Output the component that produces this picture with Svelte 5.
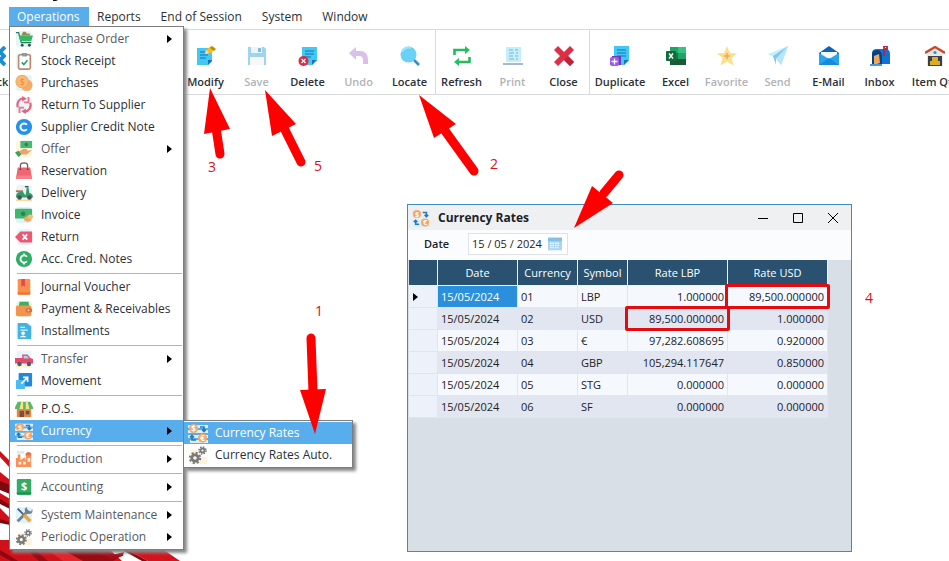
<script>
  const art = {
    cart: `<rect x="1" y="1" width="18" height="18" rx="4" fill="#e2f6f6"/><path d="M1 3h3l3 11h11" fill="none" stroke="#2a7d57" stroke-width="1.4"/><path d="M4 6h16l-2 6.5H6z" fill="#35b765"/><path d="M7 6l2-4h3l1 2h3l1 2z" fill="#9c8a4c"/><circle cx="8" cy="17" r="1.6" fill="#355"/><circle cx="16" cy="17" r="1.6" fill="#355"/>`,
    clip: `<rect x="1" y="1" width="18" height="18" rx="4" fill="#eaf6fa"/><rect x="4" y="3" width="13" height="16" rx="1.5" fill="#fff" stroke="#b98a70" stroke-width="1.8"/><rect x="7.5" y="1" width="6" height="4" rx="1" fill="#8c9aa6"/><path d="M7.5 11.5l2.3 2.4 4-4.6" fill="none" stroke="#2b9b6a" stroke-width="1.7"/>`,
    coins: `<rect x="1" y="1" width="18" height="18" rx="4" fill="#e4f5fa"/><circle cx="13" cy="12.500" r="6.500" fill="#f3ad68"/><circle cx="8" cy="8.500" r="7" fill="#fbb970" stroke="#f0a25a"/><text x="8" y="12" text-anchor="middle" font-size="9" fill="#e8823c">$</text>`,
    swap: `<rect x="1" y="1" width="18" height="18" rx="4" fill="#e9f5fb"/><path d="M3 12.500a7.500 7.500 0 0 1 6-10M17 7.500a7.500 7.500 0 0 1-6 10" fill="none" stroke="#e8607a" stroke-width="2.400"/><path d="M15 1v6h-5M5 19v-6h5" fill="none" stroke="#ee7388" stroke-width="2"/><path d="M8 0l5 3-5 3zM12 20l-5-3 5-3z" fill="#e8607a"/>`,
    cblue: `<circle cx="10" cy="10" r="9" fill="#2492e8"/><path d="M13.200 7.500a4 4 0 1 0 0 5" fill="none" stroke="#fff" stroke-width="2.200"/>`,
    offer: `<rect x="1" y="1" width="18" height="18" rx="4" fill="#fff4dc"/><rect x="6" y="1" width="13" height="8" fill="#4bb871"/><circle cx="12.500" cy="5" r="2" fill="#2a8651"/><path d="M4 13l5-3h4l1 2 5-1-6 5H6z" fill="#eda36c"/><path d="M0 14l4-2 3 4-3 3z" fill="#35a267"/>`,
    bag: `<path d="M6 7V4q0-3 4-3t4 3v3" fill="none" stroke="#79555e" stroke-width="1.500"/><path d="M3 6h14l2 13H1z" fill="#ee6672"/><path d="M1.500 15h17l.5 4H1z" fill="#f58089"/><circle cx="6" cy="8" r="1" fill="#833"/><circle cx="14" cy="8" r="1" fill="#833"/>`,
    scooter: `<rect x="1" y="1" width="18" height="15" rx="4" fill="#e6f5fa"/><path d="M1 17h18v2H1z" fill="#fbdc9c"/><path d="M1 7h8v2H1z" fill="#c86b42"/><path d="M1 15q0-6 5-6h3l2 3h1l1-8h2l1 6q4 1 4 5z" fill="#369a6b"/><path d="M11 3h4" stroke="#355" stroke-width="1.500"/><circle cx="5" cy="15" r="2.600" fill="#44545c"/><circle cx="16" cy="15" r="2.600" fill="#44545c"/>`,
    cash: `<rect x="1" y="1" width="18" height="18" rx="4" fill="#dff2fa"/><rect x="0" y="3" width="19" height="11" rx="1" fill="#43b66d"/><circle cx="9" cy="8.500" r="2.500" fill="#288550"/><ellipse cx="14" cy="14.500" rx="4" ry="3" fill="#f1a960"/><ellipse cx="17" cy="12" rx="3" ry="2.500" fill="#f6bd7d"/>`,
    ret: `<rect x="2" y="1" width="17" height="18" rx="4" fill="#e6f3fb"/><path d="M0 10l6-6h13v12H6z" fill="#ee5672"/><path d="M8.500 7l5 6m0-6l-5 6" stroke="#fff" stroke-width="2"/>`,
    cgreen: `<circle cx="10" cy="10" r="9" fill="#2fae66"/><path d="M13.200 7.500a4 4 0 1 0 0 5M10 4v3m0 6v3" fill="none" stroke="#fff" stroke-width="2"/>`,
    book: `<rect x="3" y="1" width="14" height="18" rx="1.500" fill="#fb8f4e"/><path d="M3 16h14v2H3z" fill="#e9713b"/><path d="M7 1h4v9l-2-2-2 2z" fill="#e3484f"/>`,
    wallet: `<rect x="1" y="1" width="18" height="18" rx="4" fill="#e8f6ea"/><path d="M5 2h10l1 6H4z" fill="#3fae62"/><rect x="1" y="6" width="17" height="12" rx="2" fill="#f2934e"/><rect x="12" y="9" width="7" height="5" rx="2" fill="#d86f39"/><circle cx="15" cy="11.500" r="1.200" fill="#fbd0a0"/>`,
    doc: `<rect x="1" y="1" width="18" height="18" rx="4" fill="#e4f6fb"/><path d="M3 1h10l5 4v14H3z" fill="#42b4df"/><path d="M6 6h5m-5 3h8" stroke="#d9f6ff" stroke-width="1.500"/><circle cx="9" cy="12.500" r="2" fill="#fff"/><path d="M5 17q4-4 8 0z" fill="#fff"/>`,
    truck: `<path d="M2 1h16v12H2z" fill="#e4f6fb"/><path d="M1 17h18v2H1z" fill="#ffeec7"/><path d="M0 9h8V5h6l3 4 3 1v5H0z" fill="#e8486a"/><path d="M9.500 6.500h4l2 3h-6z" fill="#9dd8ee"/><circle cx="5" cy="15.500" r="2.500" fill="#535c68"/><circle cx="15.500" cy="15.500" r="2.500" fill="#535c68"/>`,
    move: `<rect x="4" y="1" width="15" height="15" rx="1" fill="#2488d8"/><rect x="1" y="9" width="10" height="10" rx="1" fill="#49bdf3"/><path d="M7 13l7-7m-5 0h5v5" fill="none" stroke="#fff" stroke-width="1.800"/>`,
    shop: `<rect x="2" y="8" width="16" height="11" fill="#dd8a4a"/><rect x="5" y="12" width="5" height="7" fill="#80503c"/><rect x="12" y="12" width="4" height="4" fill="#6b5240"/><path d="M3 2h14l3 6v2H0V8z" fill="#58b968"/><path d="M7 2h2v8H5zm5 0h2l2 8h-4z" fill="#ffe08a"/>`,
    currency: `<path d="M0 2h20v3H0zm0 5h20v3H0zm0 5h20v3H0zm2 5h18v3H2z" fill="#d9f0fa"/><circle cx="5.500" cy="5.500" r="4.500" fill="#f9a662"/><circle cx="14.500" cy="15" r="4.500" fill="#f9a662"/><text x="5.500" y="8.500" text-anchor="middle" font-size="8" font-weight="700" fill="#fff">$</text><text x="14.500" y="18" text-anchor="middle" font-size="8" font-weight="700" fill="#fff">€</text><path d="M12 4h4v4m-2-1.500l2 2 2-2M8 17H4v-4m-2 1.500l2-2 2 2" fill="none" stroke="#2979b8" stroke-width="1.700"/>`,
    factory: `<path d="M2 1h8v3H2z" fill="#cdeefa"/><path d="M1 19V9h2V5h3v6l5-3v3l1-1V4q3-3 6 0v15z" fill="#f8905c"/><path d="M12 4q3-3 6 0v2h-6z" fill="#e66f45"/><path d="M4 13h3v3H4zm5 0h3v3H9zm5-4h3v4h-3z" fill="#fff0df"/>`,
    dollar: `<rect x="2" y="1" width="16" height="18" rx="1.500" fill="#31ad68"/><path d="M2 16h16v2H2z" fill="#208d50"/><text x="10" y="13.500" text-anchor="middle" font-size="12" font-weight="700" fill="#fff">$</text>`,
    tools: `<rect x="1" y="1" width="18" height="18" rx="4" fill="#def2fb"/><path d="M3 17L15 5" stroke="#70808c" stroke-width="3"/><path d="M13 1l1 4 4 1 1-3q2 6-4 6-5-1-4-6z" fill="#70808c"/><path d="M3 3l6 6" stroke="#4b5f6d" stroke-width="2"/><path d="M10 10l7 7" stroke="#f1a43b" stroke-width="4"/>`,
    gears: `<path d="M6 12h13v7H4zM2 5h9v5H2z" fill="#fff3dc"/><g fill="none" stroke="#77797c"><circle cx="7" cy="13" r="3.200" stroke-width="2.800"/><circle cx="7" cy="13" r="5.200" stroke-width="2" stroke-dasharray="2.080 2"/><circle cx="14.500" cy="5.500" r="2" stroke-width="1.800"/><circle cx="14.500" cy="5.500" r="3.500" stroke-width="1.600" stroke-dasharray="1.400 1.350"/></g>`,
    back: `<path d="M19 1l-9 9 9 9" fill="none" stroke="#1b8fd0" stroke-width="4"/><path d="M9 1l9 9-9 9" fill="none" stroke="#1b8fd0" stroke-width="4"/>`,
    modify: `<path d="M1 2h15v13l-4 4H1z" fill="#43c8f5"/><path d="M16 14v1l-4 4v-5z" fill="#1675c0"/><path d="M4 6h7M4 9h8m-8 3h6" stroke="#1770b5" stroke-width="1.200"/><path d="M9 8l1-4 5-4 4 3-4 4z" fill="#f5bd20"/><path d="M16 0l4 3-2 2-4-3z" fill="#bd8912"/><path d="M9 8l1-4 3 3z" fill="#f6e5bb"/>`,
    save: `<path d="M1 1h16l2 2v16H1z" fill="#9fd4ef"/><path d="M4 1h11v6H4z" fill="#eef4f8"/><path d="M11 2h3v4h-3z" fill="#7fbbe0"/><path d="M3 11h14v8H3z" fill="#f6f8fa"/>`,
    del: `<path d="M4 1h15v13l-5 5H4z" fill="#43c8f5"/><path d="M19 14l-5 5v-5z" fill="#1675c0"/><path d="M7 5h9M7 8h9m-9 3h6" stroke="#1770b5" stroke-width="1.200"/><circle cx="5.500" cy="15" r="5" fill="#d92b41"/><path d="M3.500 13l4 4m0-4l-4 4" stroke="#fff" stroke-width="1.300"/>`,
    undo: `<path d="M0 7l7-6v4h4q8 0 8 9v4h-5v-4q0-4-4-4H7v4z" fill="#d9c0ea"/>`,
    locate: `<path d="M13 13l6 6" stroke="#3290c4" stroke-width="2.600"/><circle cx="8.500" cy="8.500" r="8" fill="#69d1f5"/><path d="M2 6a7 7 0 0 1 9-4" fill="none" stroke="#9ce6fc" stroke-width="2"/>`,
    refresh: `<g fill="none" stroke="#28b95c" stroke-width="2.600"><path d="M2.500 9V4H14M17.500 11v5H6"/></g><path d="M13 0l5 4-5 4zM7 12l-5 4 5 4z" fill="#1fc162"/>`,
    print: `<path d="M3 1h15v15H3z" fill="#c2effa"/><path d="M0 17h20v2H0z" fill="#a7b9d2"/><path d="M6 4h4m2 0h3M6 7h5m2 0h2M6 10h4m2 0h3M6 13h5m2 0h2" stroke="#7eb3cf" stroke-width="1.200"/>`,
    close: `<path d="M0 4l4-4 6 6 6-6 4 4-6 6 6 6-4 4-6-6-6 6-4-4 6-6z" fill="#de3044"/><path d="M10 14l4-4 6 6-4 4z" fill="#c2213c"/>`,
    dup: `<path d="M4 0h15v14l-5 5H4z" fill="#43c8f5"/><path d="M19 14l-5 5v-5z" fill="#1675c0"/><path d="M7 4h9M7 7h9m-9 3h9" stroke="#1770b5" stroke-width="1.200"/><path d="M2 10h9v9H2z" fill="#6d3bb5"/><rect x="0" y="11" width="9" height="9" rx="2" fill="#9a5ce6"/><path d="M4.500 12.500v6m-3-3h6" stroke="#fff" stroke-width="1.300"/>`,
    excel: `<path d="M4 1h8v9H4z" fill="#21a366"/><path d="M12 1h8v6h-8z" fill="#33c481"/><path d="M4 7h8v6H4z" fill="#107c41"/><path d="M12 7h8v6h-8z" fill="#21a366"/><path d="M4 13h16v6H4z" fill="#185c37"/><rect x="0" y="5" width="10" height="10" rx="1" fill="#0f6b39"/><path d="M3 7.500l4 5m0-5l-4 5" stroke="#fff" stroke-width="1.500"/>`,
    star: `<path d="M10 0l3 7 7 .5-5.500 4.500 2 7.500L10 15.500 3.500 19.500l2-7.500L0 7.500 7 7z" fill="#fbe08c"/><path d="M10 7v6m-3-3h6" stroke="#f2a65c" stroke-width="1.500"/>`,
    send: `<path d="M0 8L20 0 7 12z" fill="#c4effc"/><path d="M20 0L13 19l-3-7z" fill="#a4dcf4"/><path d="M5 10l15-10L8 13v6z" fill="#83c9eb"/><path d="M8 13l12-13-7 19z" fill="#b4e7fa"/>`,
    mail: `<path d="M0 7l10-7 10 7v5H0z" fill="#1263b3"/><path d="M2 6h16v8H2z" fill="#f5faff"/><path d="M0 7l10 6 10-6v12H0z" fill="#2aa5ec"/><path d="M0 19l10-7 10 7z" fill="#168adb"/>`,
    inbox: `<path d="M2 17V7q0-4 5-4h8q5 0 5 5v10H2z" fill="#0f73d4"/><path d="M2 18V8q1-4 5-4t5 5v9z" fill="#0b3f84"/><path d="M4 10l5-2 1 9-6 2z" fill="#eca95c"/><path d="M14 10V0h3v3h-2" fill="none" stroke="#b82343" stroke-width="1.800"/><path d="M0 19h12" stroke="#1684e0" stroke-width="1.600"/>`,
    stock: `<path d="M2 7l8-5 8 5v13H2z" fill="#e6e7e9"/><path d="M0 7l10-6 10 6" fill="none" stroke="#c74a28" stroke-width="2.400"/><path d="M3 10h14v10H3z" fill="#3b3f47"/><path d="M5 15h10v4H5zm2-4h6v4H7z" fill="#dfac20"/><circle cx="10" cy="6.500" r="1.600" fill="#2492dc"/>`,
    calendar: `<rect x="0" y="1" width="20" height="18" fill="#a9d5f1"/><path d="M0 1h20v5H0z" fill="#83bfe6"/><path d="M3 9h14M3 12h14M3 15h12" stroke="#fff" stroke-width="2" stroke-dasharray="2 1.500"/>`
  };

  const menus = ['Operations', 'Reports', 'End of Session', 'System', 'Window'];
  const groups = [
    [
      ['modify', 'Modify'],
      ['save', 'Save', true],
      ['del', 'Delete'],
      ['undo', 'Undo', true],
      ['locate', 'Locate']
    ],
    [
      ['refresh', 'Refresh'],
      ['print', 'Print', true],
      ['close', 'Close']
    ],
    [
      ['dup', 'Duplicate'],
      ['excel', 'Excel'],
      ['star', 'Favorite', true],
      ['send', 'Send', true],
      ['mail', 'E-Mail'],
      ['inbox', 'Inbox'],
      ['stock', 'Item Qty']
    ]
  ];
  const sections = [
    [
      ['cart', 'Purchase Order', true],
      ['clip', 'Stock Receipt'],
      ['coins', 'Purchases'],
      ['swap', 'Return To Supplier'],
      ['cblue', 'Supplier Credit Note'],
      ['offer', 'Offer', true],
      ['bag', 'Reservation'],
      ['scooter', 'Delivery'],
      ['cash', 'Invoice'],
      ['ret', 'Return'],
      ['cgreen', 'Acc. Cred. Notes']
    ],
    [
      ['book', 'Journal Voucher'],
      ['wallet', 'Payment & Receivables'],
      ['doc', 'Installments']
    ],
    [
      ['truck', 'Transfer', true],
      ['move', 'Movement']
    ],
    [
      ['shop', 'P.O.S.'],
      ['currency', 'Currency', true]
    ],
    [['factory', 'Production', true]],
    [['dollar', 'Accounting', true]],
    [
      ['tools', 'System Maintenance', true],
      ['gears', 'Periodic Operation', true]
    ]
  ];
  const submenu = [
    ['currency', 'Currency Rates'],
    ['gears', 'Currency Rates Auto.']
  ];
  const rates = [
    ['01', 'LBP', '1.000000', '89,500.000000'],
    ['02', 'USD', '89,500.000000', '1.000000'],
    ['03', '€', '97,282.608695', '0.920000'],
    ['04', 'GBP', '105,294.117647', '0.850000'],
    ['05', 'STG', '0.000000', '0.000000'],
    ['06', 'SF', '0.000000', '0.000000']
  ];
  let date = $state('15 / 05 / 2024');
</script>

{#snippet icon(name, size)}
  <svg width={size} height={size} viewBox="0 0 20 20" aria-hidden="true">{@html art[name]}</svg>
{/snippet}

{#snippet tool([name, label, off])}
  <button class="tool" disabled={off}>
    {@render icon(name, 20)}
    <span>{label}</span>
  </button>
{/snippet}

<div class="app">
  <svg class="wallpaper" width="190" height="115" viewBox="0 0 190 115" aria-hidden="true">
    <path d="M0 5l10 10v7L0 11zM0 26l10 8v13L0 43zM0 47l10 6v9L0 57zM0 62l10 10v6l-10-3z" fill="#d01018" />
    <path d="M0 35l10 4v9L0 44zM0 53l10 6v4L0 58zM0 73l10 3v3L0 77z" fill="#7c0810" />
    <path d="M0 94h20l88 8 14 13H0z" fill="#cf1119" />
    <path d="M34 103l14 12h-9l-13-12zM62 103h35l24 7-8 5H74z" fill="#980b13" />
    <path d="M48 104l15 11h20l-20-11z" fill="#e5242b" />
    <path d="M98 103l14 6 12-3-1 4-11 3-19-8z" fill="#a90d15" />
    <path d="M124 102h37l19 13h-32z" fill="#d3141c" />
    <path d="M124 102l24 13h-6l-18-10z" fill="#8e0710" />
    <path d="M0 104l18 11h-7L0 109z" fill="#8e0710" />
  </svg>
  <svg class="sliver" width="5" height="2" viewBox="0 0 5 2" aria-hidden="true"><path d="M0 1V0h5L3 1z" fill="#111" /></svg>

  <nav class="menubar">
    {#each menus as name, i}
      <button class:open={i === 0}>{name}</button>
    {/each}
  </nav>

  <div class="toolbar">
    <div class="start">{@render tool(['back', 'Back'])}</div>
    {#each groups as group}
      <div class="group">
        {#each group as item}{@render tool(item)}{/each}
      </div>
    {/each}
  </div>

  <section class="window">
    <header>
      {@render icon('currency', 18)}
      <h1>Currency Rates</h1>
      <button aria-label="Minimize"><svg width="12" height="12"><path d="M1 6.500h10" /></svg></button>
      <button aria-label="Maximize"><svg width="12" height="12"><path d="M1.500 1.500h9v9h-9z" /></svg></button>
      <button aria-label="Close"><svg width="12" height="12"><path d="M1 1l10 10M11 1L1 11" /></svg></button>
    </header>
    <form>
      <label for="date">Date</label>
      <div class="field">
        <input id="date" type="text" bind:value={date} />
        <button type="button" aria-label="Pick a date">{@render icon('calendar', 14)}</button>
      </div>
    </form>
    <table>
      <colgroup>
        <col class="c-mark" /><col class="c-date" /><col class="c-cur" /><col class="c-sym" /><col class="c-rate" /><col class="c-rate" />
      </colgroup>
      <thead>
        <tr><th></th><th>Date</th><th>Currency</th><th>Symbol</th><th>Rate LBP</th><th>Rate USD</th></tr>
      </thead>
      <tbody>
        {#each rates as [code, symbol, lbp, usd], i}
          <tr>
            <td class="mark">{#if i === 0}<i class="caret"></i>{/if}</td>
            <td class:selected={i === 0}>15/05/2024</td>
            <td>{code}</td>
            <td>{symbol}</td>
            <td class="num" class:boxed={i === 1}>{lbp}</td>
            <td class="num" class:boxed={i === 0}>{usd}</td>
          </tr>
        {/each}
      </tbody>
    </table>
  </section>

  <div class="menu main">
    {#each sections as section}
      <div class="section">
        {#each section as [name, label, sub]}
          <button class:active={name === 'currency'} class:parent={sub}>
            {@render icon(name, 18)}
            <span>{label}</span>
            {#if sub}<i class="caret"></i>{/if}
          </button>
        {/each}
      </div>
    {/each}
  </div>

  <div class="menu sub">
    {#each submenu as [name, label]}
      <button class:active={name === 'currency'}>
        {@render icon(name, 20)}
        <span>{label}</span>
      </button>
    {/each}
  </div>

  <svg class="notes" width="949" height="561" viewBox="0 0 949 561" aria-hidden="true">
    <g stroke="#fe0000" stroke-width="9" stroke-linecap="round">
      <path d="M216 128l4 26M284 128l17 34M443 128l31 43M604 193l15-18M313 392l-2-54" />
    </g>
    <path fill="#fe0000" d="M210 88l20 41-26 5zM265 90l31 34-24 12zM419 95l37 29-22 14zM574 228l18-42 21 17zM315 434l-15-44 26-1z" />
    <text x="208" y="172">3</text>
    <text x="314" y="171">5</text>
    <text x="490" y="169">2</text>
    <text x="315" y="316">1</text>
    <text x="865" y="303">4</text>
  </svg>
</div>

<style>
  :global(body) {
    margin: 0;
    background: #fff;
  }
  .app {
    position: relative;
    min-height: 100vh;
    overflow: hidden;
    font: 12px/16px 'Open Sans', 'Noto Sans', sans-serif;
    color: #2b2f36;
  }
  button,
  input {
    font: inherit;
    color: inherit;
    border: 0;
    padding: 0;
    margin: 0;
    background: none;
  }
  svg {
    display: block;
    flex: none;
  }
  .wallpaper {
    position: absolute;
    left: 0;
    bottom: 0;
  }
  .sliver {
    position: absolute;
    left: 53px;
    top: 0;
  }
  .menubar {
    display: flex;
    gap: 4px;
    padding: 7px 0 2px 9px;
  }
  .menubar button {
    height: 20px;
    padding: 0 8px;
    white-space: nowrap;
  }
  .menubar .open {
    width: 80px;
    margin-right: -4px;
    text-align: left;
    background: #58aeec;
    color: #fff;
  }
  .toolbar {
    display: flex;
    height: 64px;
    border: solid #d9dadc;
    border-width: 1px 0;
    overflow: hidden;
  }
  .start {
    width: 210px;
    margin-left: -30px;
    flex: none;
  }
  .group {
    display: flex;
    flex: none;
  }
  .group + .group {
    border-left: 1px solid #d9dadc;
  }
  .tool {
    display: flex;
    flex-direction: column;
    align-items: center;
    gap: 8px;
    min-width: 51px;
    height: 64px;
    padding: 16px 0 0;
    font-weight: 600;
    font-size: 11px;
    white-space: nowrap;
  }
  .group:last-child .tool:first-child,
  .group:last-child .tool:last-child {
    min-width: 60px;
  }
  .tool:disabled {
    color: #b1b3b6;
  }
  .menu {
    position: absolute;
    box-sizing: border-box;
    border: 1px solid #7b7d80;
    background: #fff;
    box-shadow: 3px 3px 3px #888;
    padding: 1px 0;
  }
  .main {
    left: 9px;
    top: 26px;
    width: 175px;
  }
  .sub {
    left: 183px;
    top: 420px;
    width: 170px;
  }
  .menu button {
    display: flex;
    align-items: center;
    width: 100%;
    height: 22px;
    padding: 0 11px 0 5px;
    gap: 8px;
    text-align: left;
    white-space: nowrap;
  }
  .sub button {
    padding-left: 4px;
    gap: 7px;
  }
  .menu span {
    flex: 1;
  }
  .menu .parent {
    color: #55595f;
  }
  .menu .active {
    background: #58aeec;
    color: #fff;
  }
  .section + .section::before {
    content: '';
    display: block;
    height: 1px;
    margin: 3px 1px 2px 7px;
    background: #b4b4b6;
  }
  .caret {
    display: inline-block;
    border: solid transparent;
    border-width: 4px 0 4px 5px;
    border-left-color: #000;
  }
  .window {
    position: absolute;
    left: 407px;
    top: 204px;
    box-sizing: border-box;
    width: 445px;
    height: 348px;
    border: 1px solid #3e8dbd;
    background: #d8dfe6;
    color: #1d2128;
  }
  header {
    display: flex;
    align-items: center;
    height: 25px;
    padding: 0 1px 0 4px;
    background: #eef0f2;
  }
  h1 {
    flex: 1;
    margin: 0 0 0 8px;
    font-size: 12px;
    font-weight: 700;
  }
  header button {
    width: 35px;
    height: 25px;
    display: flex;
    justify-content: center;
    align-items: center;
  }
  header button path {
    fill: none;
    stroke: #000;
  }
  form {
    display: flex;
    align-items: center;
    height: 27px;
    padding: 0 0 3px 16px;
    background: #fbfcfe;
  }
  label {
    width: 44px;
    font-size: 11px;
    font-weight: 600;
  }
  .field {
    display: flex;
    align-items: center;
    width: 98px;
    height: 20px;
    border: 1px solid #e0e2ea;
    background: #fff;
  }
  .field input {
    width: 76px;
    padding-left: 3px;
    box-sizing: border-box;
    font-size: 11px;
    margin-right: 3px;
  }
  table {
    width: 419px;
    table-layout: fixed;
    border-collapse: separate;
    border-spacing: 0;
    margin-left: 1px;
    font-size: 11px;
  }
  .c-mark {
    width: 29px;
  }
  .c-date {
    width: 80px;
  }
  .c-cur {
    width: 60px;
  }
  .c-sym {
    width: 50px;
  }
  .c-rate {
    width: 100px;
  }
  th {
    height: 26px;
    padding: 0;
    box-sizing: border-box;
    background: #2a5270;
    color: #fff;
    font-weight: 400;
    border: solid #eef3f8;
    border-width: 0 1px 1px 0;
  }
  td {
    position: relative;
    height: 22px;
    box-sizing: border-box;
    padding: 0 3px;
    background: #f5f9fe;
    border: solid #dfe6ee;
    border-width: 0 1px 1px 0;
  }
  tr:nth-child(even) td {
    background: #e2e6f1;
  }
  tr td.mark {
    background: #edf1f9;
  }
  .mark .caret {
    display: block;
    margin-left: 1px;
  }
  tr td.selected {
    background: #2a90dc;
    color: #fff;
  }
  .num {
    text-align: right;
  }
  .boxed {
    z-index: 1;
  }
  .boxed::after {
    content: '';
    position: absolute;
    inset: -2px -3px -2px -3px;
    border: 3px solid #e30b10;
    border-radius: 2px;
  }
  .notes {
    position: absolute;
    left: 0;
    top: 0;
    pointer-events: none;
  }
  .notes text {
    font-size: 14px;
    fill: #d8101a;
  }
</style>
